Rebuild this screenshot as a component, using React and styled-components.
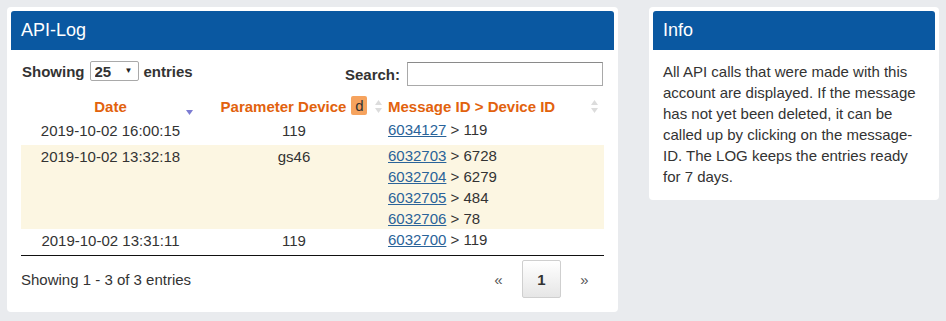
import React from "react";
import styled, { createGlobalStyle } from "styled-components";

const Global = createGlobalStyle`
  html, body { margin: 0; padding: 0; background: #e9ebee; }
  body { font-family: "Liberation Sans", Arial, sans-serif; font-size: 15px; color: #333; }
`;

const Page = styled.div`
  display: grid;
  grid-template-columns: 611px 290px;
  gap: 31px;
  align-items: start;
  padding: 7px;
`;

const Card = styled.section`
  background: #fff;
  border-radius: 4px;
  padding: 4px 4px ${(p) => p.$pb || 14}px;
`;

const CardHeader = styled.h2`
  margin: 0;
  height: 39px;
  display: flex;
  align-items: center;
  padding: 0 10px;
  background: #0a58a1;
  color: #fff;
  font-size: 18px;
  font-weight: normal;
  border-radius: 3px 3px 0 0;
`;

const CardBody = styled.div`
  padding: 0 10px;
`;

const Controls = styled.div`
  display: flex;
  justify-content: space-between;
  align-items: flex-start;
  margin-top: 11px;
`;

const ControlGroup = styled.label`
  display: flex;
  align-items: center;
  gap: ${(p) => p.$gap || 5}px;
  font-weight: bold;
  margin-top: ${(p) => p.$mt || 0}px;
  margin-left: ${(p) => p.$ml || 0}px;
  margin-right: ${(p) => p.$mr || 0}px;
`;

const SelectWrap = styled.span`
  position: relative;
  display: inline-block;
`;

const Select = styled.select`
  appearance: none;
  width: 49px;
  height: 20px;
  border: 1px solid #a9a9a9;
  border-radius: 2px;
  background: #fff;
  font: bold 15px "Liberation Sans", Arial, sans-serif;
  color: #333;
  padding: 0 0 0 4px;
  margin: 0;
`;

const SelectArrow = styled.span`
  position: absolute;
  right: 6px;
  top: 5px;
  font-size: 8px;
  color: #222;
  pointer-events: none;
`;

const SearchInput = styled.input`
  width: 196px;
  height: 24px;
  box-sizing: border-box;
  border: 1px solid #a9a9a9;
  border-top-color: #8a8a8a;
  padding: 0 4px;
  margin: 0;
`;

const Table = styled.table`
  width: 583px;
  table-layout: fixed;
  border-collapse: collapse;
  margin-top: 10px;
  border-bottom: 1px solid #111;
`;

const Th = styled.th`
  position: relative;
  color: #e2620d;
  font-weight: bold;
  font-size: 15px;
  line-height: 21px;
  padding: 0 0 2px ${(p) => p.$pl || 0}px;
  text-align: ${(p) => p.$align || "center"};
  white-space: nowrap;
`;

const Badge = styled.span`
  display: inline-block;
  margin-left: 5px;
  width: 16px;
  height: 19px;
  line-height: 19px;
  text-align: center;
  background: #f6a35e;
  color: #333;
  font-weight: normal;
  border-radius: 2px;
  vertical-align: top;
`;

const SortIcon = styled.svg`
  position: absolute;
  right: ${(p) => p.$right}px;
  top: ${(p) => p.$top}px;
`;

const Row = styled.tr`
  background: ${(p) => (p.$hl ? "#fcf6e2" : "#fff")};
`;

const Td = styled.td`
  vertical-align: top;
  line-height: 21px;
  padding: ${(p) => (p.$list ? "0" : "1px 0 4px")};
  padding-left: ${(p) => p.$pl || 0}px;
  text-align: ${(p) => p.$align || "center"};
`;

const Line = styled.div``;

const Link = styled.a`
  color: #2a6399;
  text-decoration: underline;
`;

const Footer = styled.div`
  display: flex;
  justify-content: space-between;
  align-items: center;
  margin-top: 4px;
`;

const Pager = styled.div`
  display: flex;
  gap: 4px;
`;

const PageItem = styled.span`
  width: 39px;
  height: 38px;
  box-sizing: border-box;
  display: flex;
  align-items: center;
  justify-content: center;
  color: #555;
  font-size: 15px;
  border-radius: 2px;
  ${(p) =>
    p.$active &&
    `
    border: 1px solid #cfcfcf;
    background: linear-gradient(#fff, #e6e6e6);
    color: #333;
    font-weight: bold;
  `}
`;

const InfoText = styled.p`
  margin: 11px 0 0;
  line-height: 21px;
  font-size: 15px;
  color: #333;
`;

const SortAsc = ({ right, top }) => (
  <SortIcon $right={right} $top={top} width="7" height="5" viewBox="0 0 7 5">
    <path d="M0 0 L7 0 L3.5 5 Z" fill="#7c7cd2" />
  </SortIcon>
);

const SortBoth = ({ right, top }) => (
  <SortIcon $right={right} $top={top} width="7" height="13" viewBox="0 0 7 13">
    <path d="M0 5 L7 5 L3.5 0 Z" fill="#dcdcdc" />
    <path d="M0 8 L7 8 L3.5 13 Z" fill="#dcdcdc" />
  </SortIcon>
);

const rows = [
  { date: "2019-10-02 16:00:15", dev: "119", msgs: [["6034127", "119"]] },
  {
    date: "2019-10-02 13:32:18",
    dev: "gs46",
    msgs: [
      ["6032703", "6728"],
      ["6032704", "6279"],
      ["6032705", "484"],
      ["6032706", "78"],
    ],
    hl: true,
  },
  { date: "2019-10-02 13:31:11", dev: "119", msgs: [["6032700", "119"]] },
];

export default function App() {
  return (
    <>
      <Global />
      <Page>
        <Card>
          <CardHeader>API-Log</CardHeader>
          <CardBody>
            <Controls>
              <ControlGroup $ml={1}>
                Showing
                <SelectWrap>
                  <Select defaultValue="25">
                    <option>10</option>
                    <option>25</option>
                    <option>50</option>
                  </Select>
                  <SelectArrow>▼</SelectArrow>
                </SelectWrap>
                entries
              </ControlGroup>
              <ControlGroup $mt={1} $gap={7} $mr={1}>
                Search:
                <SearchInput type="text" />
              </ControlGroup>
            </Controls>
            <Table>
              <colgroup>
                <col style={{ width: 179 }} />
                <col style={{ width: 180 }} />
                <col style={{ width: 224 }} />
              </colgroup>
              <thead>
                <tr>
                  <Th>
                    Date
                    <SortAsc right={7} top={14} />
                  </Th>
                  <Th $pl={8}>
                    Parameter Device<Badge>d</Badge>
                    <SortBoth right={-2} top={4} />
                  </Th>
                  <Th $pl={8} $align="left">
                    Message ID &gt; Device ID
                    <SortBoth right={6} top={4} />
                  </Th>
                </tr>
              </thead>
              <tbody>
                {rows.map((r) => (
                  <Row key={r.date} $hl={r.hl}>
                    <Td>{r.date}</Td>
                    <Td $pl={8}>{r.dev}</Td>
                    <Td $pl={8} $align="left" $list>
                      {r.msgs.map(([id, d]) => (
                        <Line key={id}>
                          <Link href="#">{id}</Link> &gt; {d}
                        </Line>
                      ))}
                    </Td>
                  </Row>
                ))}
              </tbody>
            </Table>
            <Footer>
              <span>Showing 1 - 3 of 3 entries</span>
              <Pager>
                <PageItem>«</PageItem>
                <PageItem $active>1</PageItem>
                <PageItem>»</PageItem>
              </Pager>
            </Footer>
          </CardBody>
        </Card>
        <Card $pb={13}>
          <CardHeader>Info</CardHeader>
          <CardBody>
            <InfoText>
              All API calls that were made with this account are displayed. If
              the message has not yet been deleted, it can be called up by
              clicking on the message-ID. The LOG keeps the entries ready for 7
              days.
            </InfoText>
          </CardBody>
        </Card>
      </Page>
    </>
  );
}
